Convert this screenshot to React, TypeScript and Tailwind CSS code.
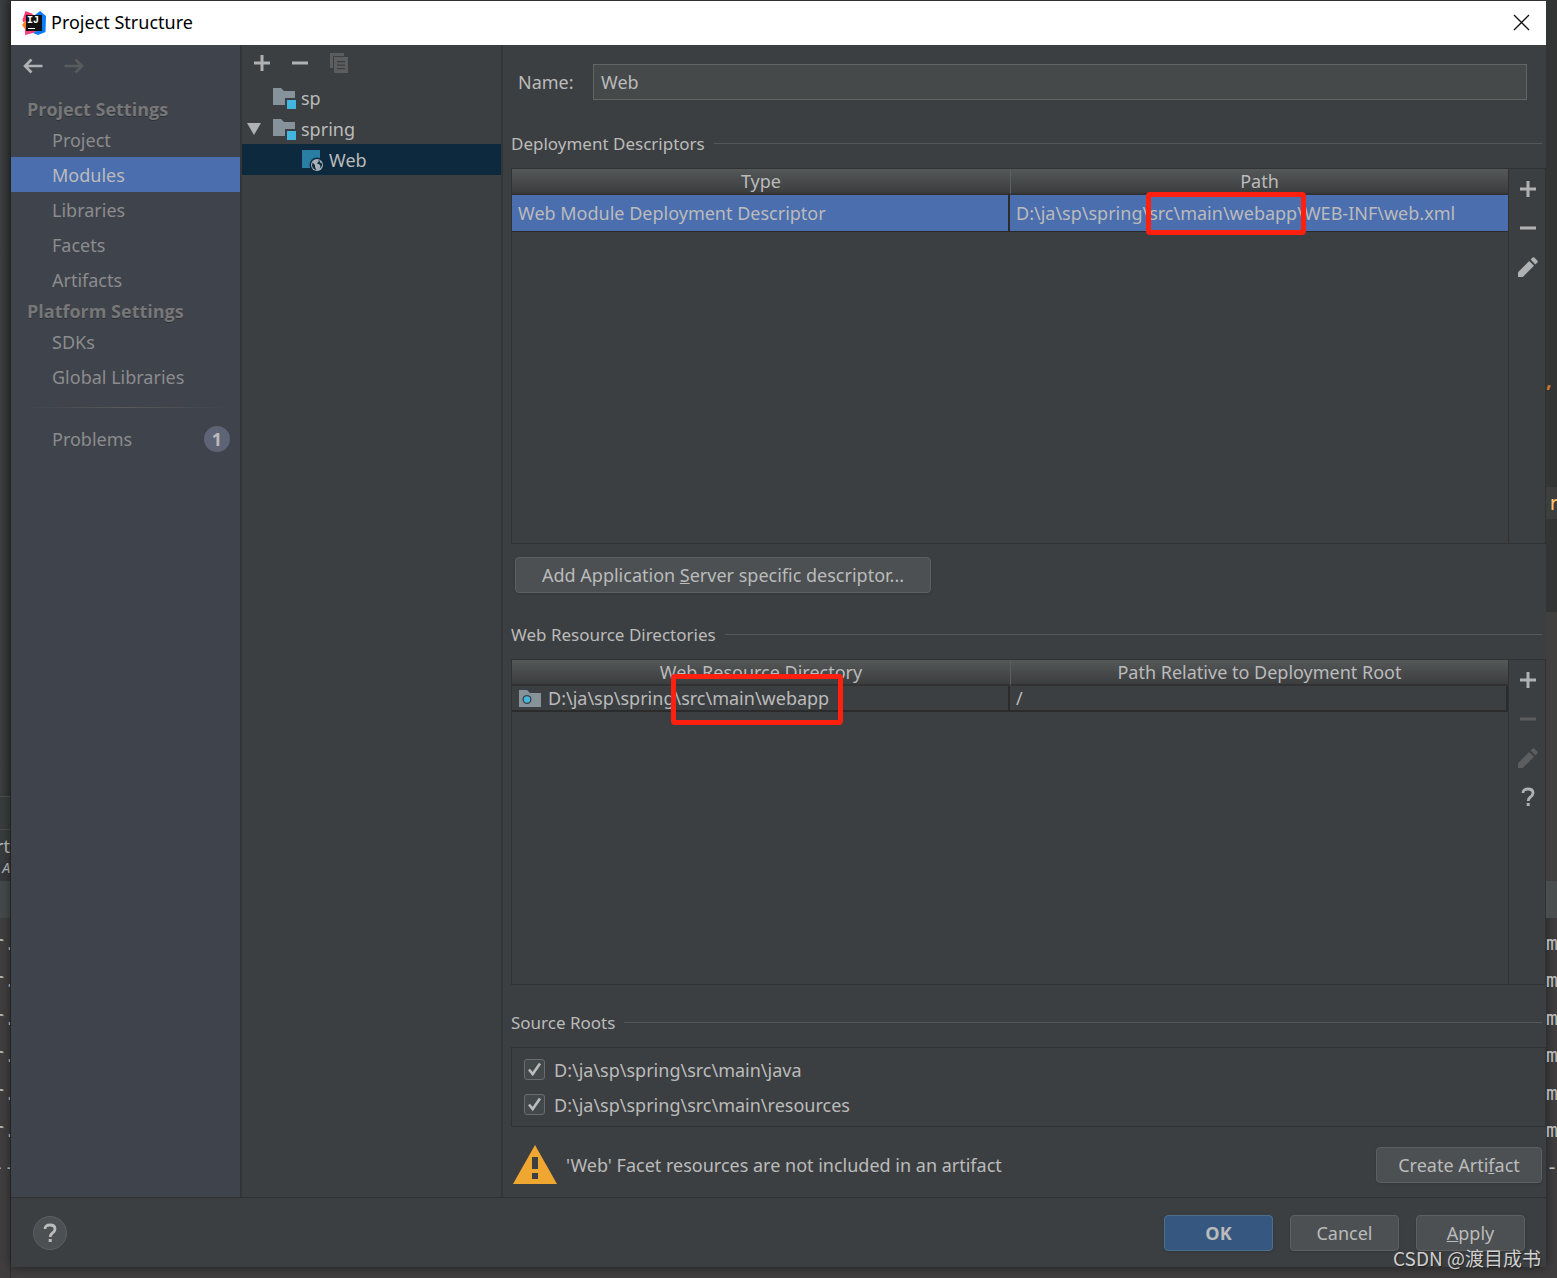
import type { ReactNode } from 'react'
import clsx from 'clsx'

const projectSettings = ['Project', 'Modules', 'Libraries', 'Facets', 'Artifacts']
const platformSettings = ['SDKs', 'Global Libraries']
const sourceRoots = ['D:\\ja\\sp\\spring\\src\\main\\java', 'D:\\ja\\sp\\spring\\src\\main\\resources']
const editorRows = [0, 1, 2, 3, 4, 5]

function IdeaLogo() {
  return (
    <svg width="24" height="24" viewBox="0 0 24 24" aria-hidden="true">
      <path d="M3.5 0L11 3L6 10L1 11L0.5 9Z" fill="#fc3b6c" />
      <path d="M0 14L4 9L8 17L3 18Z" fill="#fc801d" />
      <path d="M3 17L12 19L16 21L11 22L3 24Z" fill="#f5437e" />
      <path d="M13 4L18 0L24 5L23.5 21L16 24L11 22L18 18Z" fill="#087cfa" />
      <rect x="4" y="4" width="16" height="16" fill="#111" />
      <text x="5" y="12" fill="#fff" className="font-['Liberation_Mono'] text-[10px] font-bold">IJ</text>
      <rect x="6" y="17" width="7" height="1" fill="#fff" />
    </svg>
  )
}

function ArrowIcon({ flip }: { flip?: boolean }) {
  return (
    <svg width="20" height="16" viewBox="0 0 20 16" fill="none" className={clsx(flip ? 'rotate-180 text-[#5a5b5d]' : 'text-[#afb1b3]')}>
      <path d="M19.5 8H2M8.5 1.5L2 8L8.5 14.5" stroke="currentColor" strokeWidth="2.6" />
    </svg>
  )
}

function PlusIcon() {
  return (
    <svg width="16" height="16" viewBox="0 0 16 16">
      <path d="M6.5 0H9.5V6.5H16V9.5H9.5V16H6.5V9.5H0V6.5H6.5Z" fill="currentColor" />
    </svg>
  )
}

function MinusIcon() {
  return (
    <svg width="16" height="16" viewBox="0 0 16 16">
      <rect x="0" y="6.5" width="16" height="3" fill="currentColor" />
    </svg>
  )
}

function CopyIcon() {
  return (
    <svg width="18" height="20" viewBox="0 0 18 20">
      <path d="M0 0H14V3H3V15H0Z" fill="currentColor" />
      <path d="M4 4H18V20H4ZM7 8V9.3H15V8ZM7 11.5V12.8H15V11.5ZM7 15V16.3H15V15Z" fill="currentColor" fillRule="evenodd" />
    </svg>
  )
}

function PencilIcon() {
  return (
    <svg width="20" height="20" viewBox="0 0 20 20" fill="currentColor">
      <path d="M0 15.2L11.2 4L16 8.8L4.8 20H0Z" />
      <path d="M12.6 2.6L14.7 0.5Q15.5 0 16.3 0.5L19.5 3.7Q20 4.5 19.5 5.3L17.4 7.4Z" />
    </svg>
  )
}

function HelpIcon() {
  return (
    <svg width="14" height="20" viewBox="0 0 14 20" fill="none">
      <path d="M2 6Q2 2 7 2Q12 2 12 6Q12 8 9.5 10Q7.2 11.7 7.2 14" stroke="currentColor" strokeWidth="2.8" />
      <rect x="5.7" y="16" width="3" height="3" fill="currentColor" />
    </svg>
  )
}

function FolderIcon() {
  return (
    <svg width="23" height="22" viewBox="0 0 23 22">
      <path d="M0 1H8L11 4H22V11H12V18H0Z" fill="#87939a" />
      <rect x="14" y="13" width="9" height="9" fill="#40b6e0" />
    </svg>
  )
}

function ResourceFolderIcon() {
  return (
    <svg width="22" height="18" viewBox="0 0 22 18">
      <path d="M0 1H8L11 4H22V18H0Z" fill="#87939a" />
      <circle cx="8" cy="10.5" r="4.5" fill="#3c3f41" />
      <circle cx="8" cy="10.5" r="3.2" fill="#40b6e0" />
    </svg>
  )
}

function WebFacetIcon() {
  return (
    <svg width="22" height="22" viewBox="0 0 22 22">
      <rect x="0" y="1" width="18" height="18" fill="#2a7ea3" />
      <circle cx="15" cy="16" r="7.5" fill="#0d293e" />
      <circle cx="15" cy="16" r="6" fill="#a7b0b8" />
      <path d="M10.5 13.5L13 16V18L14.5 21Q11 20.5 10 17ZM15.5 11L17 12L15 14.5L17.5 15.5L18.5 17L17.5 19.5Q20.5 17.5 20 14.5L18 13.5L17.5 11.5Z" fill="#0d293e" />
    </svg>
  )
}

function WarningIcon() {
  return (
    <svg width="44" height="39" viewBox="0 0 44 39">
      <path d="M22 0L44 39H0Z" fill="#f0a732" />
      <rect x="19" y="12" width="6" height="12" fill="#3c3f41" />
      <rect x="19" y="28" width="6" height="6" fill="#3c3f41" />
    </svg>
  )
}

function NavItem({ label, badge }: { label: string; badge?: number }) {
  const active = label === 'Modules'
  return (
    <a
      href="#"
      className={clsx(
        'flex h-[35px] items-center justify-between pr-[10px] pl-[41px]',
        active ? 'bg-[#4b6eaf] text-[#bbbbbb]' : 'text-[#8c8c8c]'
      )}
    >
      {label}
      {badge && (
        <span className="flex size-[26px] items-center justify-center rounded-full bg-[#5e6375] font-['Open_Sans',sans-serif] font-bold text-[#bbbbbb]">{badge}</span>
      )}
    </a>
  )
}

function NavHeading({ children }: { children: ReactNode }) {
  return (
    <h2 className="flex h-[27px] items-center pl-4 font-['Open_Sans',sans-serif] font-bold text-[#777777] [text-shadow:0_1px_0_#2f3238]">
      {children}
    </h2>
  )
}

function SectionTitle({ children, className }: { children: ReactNode; className: string }) {
  return (
    <div className={clsx('mr-1 mb-3 flex h-6 shrink-0 items-center gap-[9px] text-[17px]', className)}>
      <h3>{children}</h3>
      <span className="mb-[2px] h-px flex-1 bg-[#55575a]" />
    </div>
  )
}

function ToolButton({ label, disabled, children }: { label: string; disabled?: boolean; children: ReactNode }) {
  return (
    <button
      aria-label={label}
      disabled={disabled}
      className="flex h-[39px] w-full items-center justify-center text-[#afb1b3] disabled:text-[#5b5d5e]"
    >
      {children}
    </button>
  )
}

function Button({ primary, className, children }: { primary?: boolean; className?: string; children: ReactNode }) {
  return (
    <button
      className={clsx(
        'h-9 shrink-0 rounded border whitespace-nowrap shadow-sm',
        primary ? "border-[#4c708c] bg-[#365880] font-['Open_Sans',sans-serif] font-bold" : 'border-[#5e6060] bg-[#4c5052]',
        className
      )}
    >
      {children}
    </button>
  )
}

function HeaderCell({ children }: { children: ReactNode }) {
  return (
    <th className="h-[26px] w-1/2 border-b-2 border-[#323232] bg-linear-to-b from-[#555859] to-[#3b3d3f] p-0 text-center leading-6 font-normal not-first:border-l not-first:border-l-[#5c5f60]">
      {children}
    </th>
  )
}

export default function App() {
  return (
    <div className="relative grid min-h-screen grid-cols-[11px_1fr_11px] overflow-hidden bg-[#403e3e] font-['Noto_Sans','Noto_Sans_CJK_SC',sans-serif] text-[18px] leading-6 text-[#bbbbbb]">
      {/* editor behind the dialog, left edge */}
      <div className="flex flex-col overflow-hidden border-r border-[#2e2e2e]">
        <div className="h-[796px] bg-linear-to-r from-[#3c3f41] to-[#313334]" />
        <div className="h-[34px] border-y border-[#4f4c4a] bg-[#393c3d]" />
        <div className="flex h-8 items-center justify-end bg-[#393c3d]">rt</div>
        <div className="flex h-[19px] justify-end overflow-hidden bg-[#38393d] text-sm leading-3 italic">A</div>
        <div className="h-[37px] bg-[#46494b]" />
        <div className="mt-[11px] grid h-[299px] grid-cols-1 grid-rows-8 font-['DejaVu_Sans_Mono',monospace] text-xl">
          {editorRows.map((row) => (
            <span key={row} className="-ml-2 whitespace-nowrap">r.</span>
          ))}
          <span className="-ml-2 whitespace-nowrap">--</span>
        </div>
      </div>

      <div className="mt-px mb-[11px] flex min-w-0 flex-col bg-[#3c3f41] shadow-[0_0_10px_rgba(0,0,0,0.5)]">
        <header className="flex h-11 shrink-0 items-center bg-white pr-4 pb-px pl-[11px] text-black">
          <IdeaLogo />
          <h1 className="ml-[5px] flex-1 pb-[2px]">Project Structure</h1>
          <button aria-label="Close">
            <svg width="17" height="17" viewBox="0 0 17 17" stroke="#111" strokeWidth="1.3">
              <path d="M1 1L16 16M16 1L1 16" />
            </svg>
          </button>
        </header>

        <div className="flex flex-1">
          <nav className="w-[231px] shrink-0 border-r-2 border-[#333537] bg-[#3f434c]">
            <div className="mb-2 flex h-[42px] items-center gap-[21px] pl-3">
              <button aria-label="Back">
                <ArrowIcon />
              </button>
              <button aria-label="Forward" disabled>
                <ArrowIcon flip />
              </button>
            </div>
            <NavHeading>Project Settings</NavHeading>
            {projectSettings.map((label) => (
              <NavItem key={label} label={label} />
            ))}
            <NavHeading>Platform Settings</NavHeading>
            {platformSettings.map((label) => (
              <NavItem key={label} label={label} />
            ))}
            <div className="mx-3 my-[13px] h-px bg-linear-to-r from-transparent via-[#5a5a5a] to-transparent" />
            <NavItem label="Problems" badge={1} />
          </nav>

          <aside className="w-[261px] shrink-0 border-r-2 border-[#333537]">
            <div className="flex h-[37px] items-center gap-[22px] pb-[2px] pl-3 text-[#afb1b3]">
              <button aria-label="Add module"><PlusIcon /></button>
              <button aria-label="Remove module"><MinusIcon /></button>
              <button aria-label="Copy module" disabled className="text-[#5b5d5e]"><CopyIcon /></button>
            </div>
            <ul>
              <li className="flex h-[31px] items-center gap-[5px] pl-[31px]">
                <FolderIcon />
                sp
              </li>
              <li className="flex h-[31px] items-center gap-[5px] pl-[5px]">
                <svg width="14" height="12" viewBox="0 0 14 12" className="mr-[7px]">
                  <path d="M0 0H14L7 12Z" fill="#afb1b3" />
                </svg>
                <FolderIcon />
                spring
              </li>
              <li className="flex h-[31px] items-center gap-[5px] bg-[#0d293e] pl-[60px]">
                <WebFacetIcon />
                Web
              </li>
            </ul>
          </aside>

          <main className="flex min-w-0 flex-1 flex-col pt-[19px] pl-2">
            <div className="mr-[19px] flex items-center pl-[7px]">
              <label htmlFor="name" className="w-[75px] shrink-0">Name:</label>
              <input id="name" defaultValue="Web" className="h-9 min-w-0 flex-1 border border-[#646464] bg-[#45494a] px-[7px]" />
            </div>

            <SectionTitle className="mt-8">Deployment Descriptors</SectionTitle>
            <div className="flex h-[376px] shrink-0 border border-[#323232]">
              <div className="min-w-0 flex-1">
                <table className="w-full table-fixed border-separate border-spacing-0">
                  <thead>
                    <tr>
                      <HeaderCell>Type</HeaderCell>
                      <HeaderCell>Path</HeaderCell>
                    </tr>
                  </thead>
                  <tbody>
                    <tr className="bg-[#4b6eaf]">
                      <td className="h-[37px] border-r-2 border-b border-[#2b2b2b] px-[6px] py-0">Web Module Deployment Descriptor</td>
                      <td className="h-[37px] border-b border-[#2b2b2b] px-[6px] py-0 whitespace-nowrap">
                        D:\ja\sp\spring\
                        <span className="relative inline-block">
                          src\main\webapp
                          <span className="absolute -top-[9px] -right-[9px] -bottom-[10px] -left-[3px] rounded border-[5px] border-[#ff2010]" />
                        </span>
                        \WEB-INF\web.xml
                      </td>
                    </tr>
                  </tbody>
                </table>
              </div>
              <div className="w-[37px] shrink-0 border-l border-[#323232] pl-[2px]">
                <ToolButton label="Add descriptor"><PlusIcon /></ToolButton>
                <ToolButton label="Remove descriptor"><MinusIcon /></ToolButton>
                <ToolButton label="Edit descriptor"><PencilIcon /></ToolButton>
              </div>
            </div>

            <Button className="mt-[13px] ml-1 self-start px-[26px]">
              Add Application <u>S</u>erver specific descriptor...
            </Button>

            <SectionTitle className="mt-[30px]">Web Resource Directories</SectionTitle>
            <div className="flex min-h-[200px] flex-1 border border-[#323232]">
              <div className="min-w-0 flex-1">
                <table className="w-full table-fixed border-separate border-spacing-0">
                  <thead>
                    <tr>
                      <HeaderCell>Web Resource Directory</HeaderCell>
                      <HeaderCell>Path Relative to Deployment Root</HeaderCell>
                    </tr>
                  </thead>
                  <tbody>
                    <tr>
                      <td className="h-[26px] border-r-2 border-b-2 border-[#2b2b2b] px-[7px] py-0">
                        <div className="flex items-center whitespace-nowrap">
                          <span className="mr-[7px]"><ResourceFolderIcon /></span>
                          D:\ja\sp\spring\
                          <span className="relative">
                            src\main\webapp
                            <span className="absolute -top-3 -right-[14px] -bottom-[15px] -left-[10px] rounded border-[5px] border-[#ff2010]" />
                          </span>
                        </div>
                      </td>
                      <td className="h-[26px] border-r-2 border-b-2 border-[#2b2b2b] px-[6px] py-0">/</td>
                    </tr>
                  </tbody>
                </table>
              </div>
              <div className="w-[37px] shrink-0 border-l border-[#323232] pl-[2px]">
                <ToolButton label="Add directory"><PlusIcon /></ToolButton>
                <ToolButton label="Remove directory" disabled><MinusIcon /></ToolButton>
                <ToolButton label="Edit directory" disabled><PencilIcon /></ToolButton>
                <ToolButton label="Help on directories"><HelpIcon /></ToolButton>
              </div>
            </div>

            <SectionTitle className="mt-[26px]">Source Roots</SectionTitle>
            <div className="border border-[#323232] py-1 pl-3">
              {sourceRoots.map((root) => (
                <label key={root} className="flex h-[35px] items-center gap-[9px]">
                  <span className="grid size-[21px]">
                    <input type="checkbox" defaultChecked className="peer col-start-1 row-start-1 size-[21px] appearance-none rounded-[3px] border border-[#6b6b6b] bg-[#43494a]" />
                    <svg viewBox="0 0 21 21" fill="none" className="pointer-events-none invisible col-start-1 row-start-1 peer-checked:visible">
                      <path d="M5 10.5L8.7 15L16 4.5" stroke="#bbbbbb" strokeWidth="2.6" />
                    </svg>
                  </span>
                  {root}
                </label>
              ))}
            </div>

            <div className="mt-[18px] mr-1 mb-[13px] flex items-center pl-[2px]">
              <WarningIcon />
              <p className="ml-[9px] flex-1">'Web' Facet resources are not included in an artifact</p>
              <Button className="w-[166px]">
                Create Arti<u>f</u>act
              </Button>
            </div>
          </main>
        </div>

        <footer className="flex h-[70px] shrink-0 items-center gap-[17px] border-t border-[#2f3133] pr-[21px] pl-[22px]">
          <button aria-label="Help" className="mr-auto flex size-[34px] items-center justify-center rounded-full border border-[#5e6060] bg-[#4c5052]">
            <HelpIcon />
          </button>
          <Button primary className="w-[109px]">OK</Button>
          <Button className="w-[109px]">Cancel</Button>
          <Button className="w-[109px]">
            <u>A</u>pply
          </Button>
        </footer>
      </div>

      {/* editor behind the dialog, right edge */}
      <div className="flex flex-col overflow-hidden">
        <div className="flex h-[487px] flex-col justify-end bg-[#333434] pb-[93px] text-xl font-bold text-[#cc7832]">,</div>
        <div className="flex h-8 items-center bg-[#3e3e3e] pl-[2px] font-['DejaVu_Sans_Mono',monospace] text-xl text-[#ffc66d]">r</div>
        <div className="h-[93px] bg-[#333434]" />
        <div className="h-[269px] bg-[#42403f]" />
        <div className="h-[37px] bg-[#4b4e4f]" />
        <div className="mt-[11px] grid h-[299px] grid-cols-1 grid-rows-8 font-['DejaVu_Sans_Mono',monospace] text-xl">
          {editorRows.map((row) => (
            <span key={row}>m</span>
          ))}
          <span>-</span>
        </div>
      </div>

      <p className="absolute right-4 bottom-2 font-['Noto_Sans_CJK_SC',sans-serif] text-[19px] text-[#d0d0d0] [text-shadow:1px_1px_1px_#222]">
        CSDN @渡目成书
      </p>
    </div>
  )
}
